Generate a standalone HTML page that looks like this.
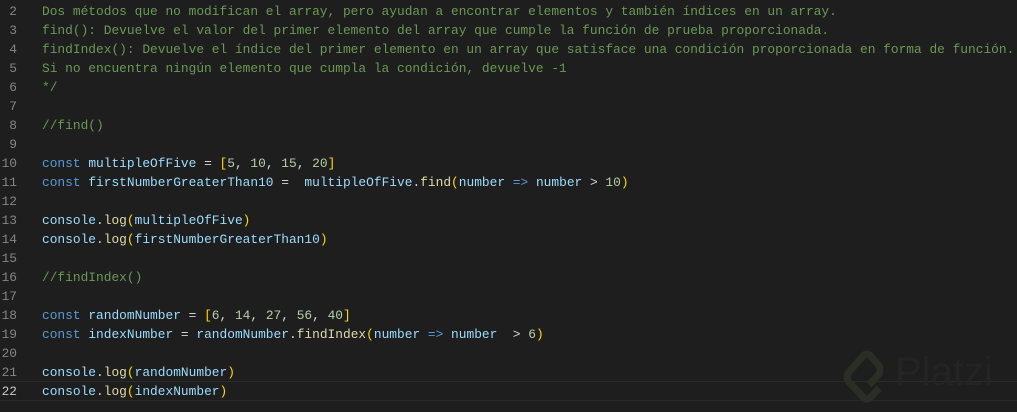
<!DOCTYPE html>
<html><head><meta charset="utf-8"><style>
body{margin:0;width:1017px;height:412px;background:#1e1e1e;overflow:hidden;position:relative;font-family:"Liberation Mono",monospace;font-size:12.86px;}
.l{position:absolute;left:0;height:19px;line-height:19px;white-space:pre;width:1017px}
.n{position:absolute;left:0;width:17px;text-align:right;color:#858585}
.c{position:absolute;left:42px;color:#d4d4d4}
.cm{color:#6a9955}.k{color:#569cd6}.v{color:#9cdcfe}.f{color:#dcdcaa}.num{color:#b5cea8}.b{color:#ffd700}
.hl{position:absolute;left:0;top:381px;width:1017px;height:18px;border-top:1px solid #2a2a2a;border-bottom:1px solid #2a2a2a}
</style></head><body>
<div class="hl"></div>
<svg style="position:absolute;left:835px;top:350px" width="48" height="58" viewBox="0 0 48 58"><path d="M28 6 L14 22 Q10 27 14 32 L28 47 Q32 51 36 47 L44 38" fill="none" stroke="#2b2e24" stroke-width="7" stroke-linejoin="round"/><path d="M28 6 Q32 2 36 6 L44 16 Q47 20 44 24 L34 35" fill="none" stroke="#2b2e24" stroke-width="7" stroke-linejoin="round"/></svg>
<div style="position:absolute;left:895px;top:350px;font-family:'Liberation Sans',sans-serif;font-size:40px;color:#242424">Platzi</div>
<div class="l" style="top:2px"><span class="n">2</span><span class="c cm">Dos métodos que no modifican el array, pero ayudan a encontrar elementos y también índices en un array.</span></div>
<div class="l" style="top:21px"><span class="n">3</span><span class="c cm">find(): Devuelve el valor del primer elemento del array que cumple la función de prueba proporcionada.</span></div>
<div class="l" style="top:40px"><span class="n">4</span><span class="c cm">findIndex(): Devuelve el índice del primer elemento en un array que satisface una condición proporcionada en forma de función.</span></div>
<div class="l" style="top:59px"><span class="n">5</span><span class="c cm">Si no encuentra ningún elemento que cumpla la condición, devuelve -1</span></div>
<div class="l" style="top:78px"><span class="n">6</span><span class="c cm">*/</span></div>
<div class="l" style="top:97px"><span class="n">7</span></div>
<div class="l" style="top:116px"><span class="n">8</span><span class="c cm">//find()</span></div>
<div class="l" style="top:135px"><span class="n">9</span></div>
<div class="l" style="top:154px"><span class="n">10</span><span class="c"><span class="k">const</span> <span class="v">multipleOfFive</span> = <span class="b">[</span><span class="num">5</span>, <span class="num">10</span>, <span class="num">15</span>, <span class="num">20</span><span class="b">]</span></span></div>
<div class="l" style="top:173px"><span class="n">11</span><span class="c"><span class="k">const</span> <span class="v">firstNumberGreaterThan10</span> =  <span class="v">multipleOfFive</span>.<span class="f">find</span><span class="b">(</span><span class="v">number</span> <span class="k">=&gt;</span> <span class="v">number</span> &gt; <span class="num">10</span><span class="b">)</span></span></div>
<div class="l" style="top:192px"><span class="n">12</span></div>
<div class="l" style="top:211px"><span class="n">13</span><span class="c"><span class="v">console</span>.<span class="f">log</span><span class="b">(</span><span class="v">multipleOfFive</span><span class="b">)</span></span></div>
<div class="l" style="top:230px"><span class="n">14</span><span class="c"><span class="v">console</span>.<span class="f">log</span><span class="b">(</span><span class="v">firstNumberGreaterThan10</span><span class="b">)</span></span></div>
<div class="l" style="top:249px"><span class="n">15</span></div>
<div class="l" style="top:268px"><span class="n">16</span><span class="c cm">//findIndex()</span></div>
<div class="l" style="top:287px"><span class="n">17</span></div>
<div class="l" style="top:306px"><span class="n">18</span><span class="c"><span class="k">const</span> <span class="v">randomNumber</span> = <span class="b">[</span><span class="num">6</span>, <span class="num">14</span>, <span class="num">27</span>, <span class="num">56</span>, <span class="num">40</span><span class="b">]</span></span></div>
<div class="l" style="top:325px"><span class="n">19</span><span class="c"><span class="k">const</span> <span class="v">indexNumber</span> = <span class="v">randomNumber</span>.<span class="f">findIndex</span><span class="b">(</span><span class="v">number</span> <span class="k">=&gt;</span> <span class="v">number</span>  &gt; <span class="num">6</span><span class="b">)</span></span></div>
<div class="l" style="top:344px"><span class="n">20</span></div>
<div class="l" style="top:363px"><span class="n">21</span><span class="c"><span class="v">console</span>.<span class="f">log</span><span class="b">(</span><span class="v">randomNumber</span><span class="b">)</span></span></div>
<div class="l" style="top:382px"><span class="n" style="color:#c6c6c6">22</span><span class="c"><span class="v">console</span>.<span class="f">log</span><span class="b">(</span><span class="v">indexNumber</span><span class="b">)</span></span></div>
</body></html>
